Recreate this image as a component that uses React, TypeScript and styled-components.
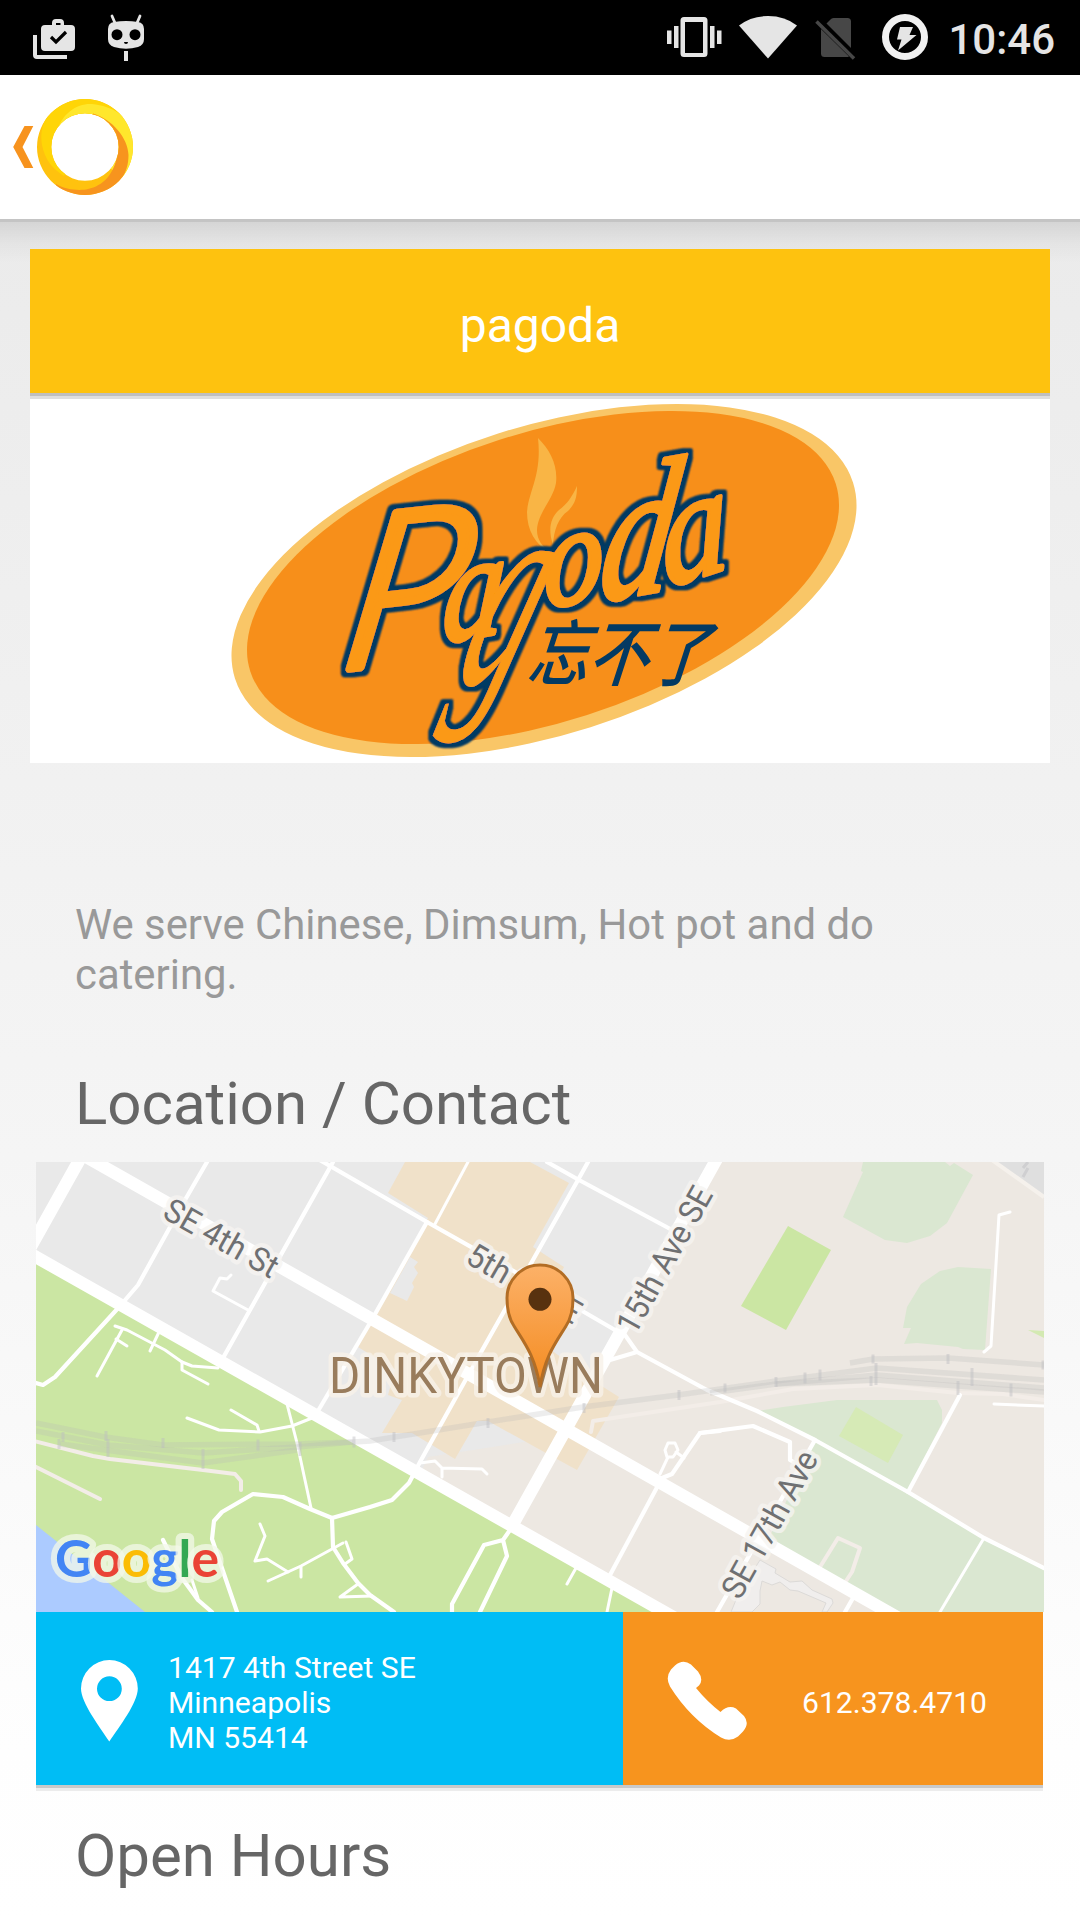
import React from 'react';
import styled, { createGlobalStyle } from 'styled-components';

const GlobalStyle = createGlobalStyle`
  * { box-sizing: border-box; }
  html, body { margin: 0; padding: 0; background: #fff; }
  body { font-family: Roboto, "Noto Sans", sans-serif; }
  svg { display: block; flex: none; }
`;

const Screen = styled.div`
  width: 1080px;
  height: 1920px;
  overflow: hidden;
  display: flex;
  flex-direction: column;
`;

const StatusBar = styled.div`
  height: 75px;
  flex: none;
  background: #000;
  display: flex;
  justify-content: space-between;
  padding: 0 25px 0 32px;
`;

const StatusGroup = styled.div<{ $gap: number }>`
  display: flex;
  gap: ${(p) => p.$gap}px;
`;

const Clock = styled.time`
  margin-left: 6px;
  font-size: 42px;
  font-weight: 500;
  line-height: 49px;
  padding-top: 15px;
  color: #e5e5e5;
  white-space: nowrap;
`;

const AppBar = styled.header`
  height: 144px;
  flex: none;
  background: #fff;
  display: flex;
`;

const Content = styled.main`
  flex: 1;
  display: flex;
  flex-direction: column;
  padding-top: 30px;
  background:
    linear-gradient(#c4c4c4, #c4c4c4) 0 0 / 100% 3px no-repeat,
    linear-gradient(rgba(0, 0, 0, 0.1), rgba(0, 0, 0, 0.03) 55%, rgba(0, 0, 0, 0)) 0 0 / 100% 44px no-repeat,
    linear-gradient(#ebebeb, #f5f5f5 55%, #fefefe 90%, #fff);
`;

const TitleBar = styled.h1`
  margin: 0 30px;
  height: 150px;
  flex: none;
  border-bottom: 3px solid #dedede;
  box-shadow: inset 0 -3px 0 #bfbfbf;
  background: #fec20f;
  color: #fff;
  font-size: 48px;
  font-weight: 400;
  line-height: 56px;
  padding-top: 49px;
  text-align: center;
`;

const Banner = styled.div`
  margin: 0 30px;
  height: 364px;
  flex: none;
  background: #fff;
`;

const Description = styled.p`
  margin: 137px 75px 0;
  font-size: 41.85px;
  line-height: 49.5px;
  color: #999;
`;

const SectionTitle = styled.h2<{ $top: number }>`
  margin: ${(p) => p.$top}px 75px 0;
  font-size: 60px;
  font-weight: 400;
  line-height: 70px;
  color: #666;
`;

const MapBox = styled.div`
  margin: 23px 36px 0;
  height: 450px;
  flex: none;
`;

const ContactRow = styled.div`
  display: flex;
  flex: none;
  height: 179px;
  margin: 0 37px 0 36px;
  border-bottom: 3px solid #ececec;
  box-shadow: inset 0 -3px 0 #c9c9c9;
  padding-bottom: 3px;
`;

const ContactCell = styled.a<{ $color: string; $width: number; $left: number; $gap: number }>`
  display: flex;
  align-items: center;
  width: ${(p) => p.$width}px;
  padding-top: 5px;
  padding-left: ${(p) => p.$left}px;
  gap: ${(p) => p.$gap}px;
  background: ${(p) => p.$color};
  color: #fff;
`;

const ContactText = styled.span`
  padding-top: 2px;
  font-size: 30.1px;
  line-height: 35px;
`;

/* ---- status bar icons ---- */

const StatusIcon = ({ x, w, children }: { x: number; w: number; children: React.ReactNode }) => (
  <svg width={w} height={75} viewBox={`${x} 0 ${w} 75`} fill="#e5e5e5">
    {children}
  </svg>
);

const WorkDone = () => (
  <StatusIcon x={32} w={46}>
    <path d="M33 35h4v20h30v4H37q-4 0-4-4z" />
    <path
      fillRule="evenodd"
      d="M45 25h7v-2q0-4 4-4h4q4 0 4 4v2h7q4 0 4 4v18q0 4-4 4H45q-4 0-4-4V29q0-4 4-4zm11 0h4.500v-2H56z"
    />
    <path d="M51 37l5 5 10-10" fill="none" stroke="#000" strokeWidth="3.200" />
  </StatusIcon>
);

const Cyanogen = () => (
  <StatusIcon x={106} w={40}>
    <path d="M112 16l3 7M140 16l-3 7" stroke="#e5e5e5" strokeWidth="2.800" strokeLinecap="round" />
    <path d="M114 22q12-2 24 0 6 1 6 7v10q0 6-6 8-12 3.500-24 0-6-2-6-8V29q0-6 6-7z" />
    <circle cx="117" cy="34.700" r="5.500" fill="#000" />
    <circle cx="135" cy="34.700" r="5.500" fill="#000" />
    <path d="M124 42h4q0 2-2 2t-2-2z" fill="#000" />
    <path d="M124 51h4v10h-4z" />
  </StatusIcon>
);

const Vibrate = () => (
  <StatusIcon x={664} w={60}>
    <path d="M667 30.500h4.500v13.500H667zM674 26h4.500v22H674zM710 26h4.500v22H710zM717 30.500h4.500v13.500H717z" />
    <path fillRule="evenodd" d="M684 17h20q3.500 0 3.500 3.500v33q0 3.500-3.500 3.500h-20q-3.500 0-3.500-3.500v-33q0-3.500 3.500-3.500zm1 5v31h18V22z" />
  </StatusIcon>
);

const Wifi = () => (
  <StatusIcon x={736} w={64}>
    <path d="M768 58.500L739 25.500Q751 16 768 16t29 9.500z" />
  </StatusIcon>
);

const NoSim = () => (
  <StatusIcon x={812} w={56}>
    <path d="M826.500 23.500l4-4q1-1.500 3-1.500h14q3.500 0 3.500 3.500V48zM821 29l28 27.500q-1 .5-3 .5h-21.500q-3.500 0-3.500-3.500z" fill="#474747" />
    <path d="M816.500 21.500L854 58.500" stroke="#474747" strokeWidth="3.500" />
  </StatusIcon>
);

const Charge = () => (
  <StatusIcon x={880} w={50}>
    <circle cx="905" cy="37" r="19.500" fill="none" stroke="#f1f1f1" strokeWidth="7" />
    <path d="M900 27h13l-3.500 8h7L898 50.500l3.500-11H897z" />
  </StatusIcon>
);

/* ---- app bar ---- */

const BackLogo = () => (
  <svg width={140} height={144} viewBox="0 75 140 144">
    <defs>
      <clipPath id="ring">
        <path
          clipRule="evenodd"
          d="M37 147a48 48 0 1 0 96 0a48 48 0 1 0-96 0zM51.300 147a33.700 33.700 0 1 1 67.400 0a33.700 33.700 0 1 1-67.400 0z"
        />
      </clipPath>
    </defs>
    <path d="M24.500 126H33.300L22.500 147L33.300 168H24.500L13.200 147z" fill="#f7931e" />
    <g clipPath="url(#ring)">
      <rect x="30" y="90" width="110" height="110" fill="#ffc20e" />
      <path d="M50 112C42 122 40 135 42 145C45 160 52 168 64 176L85 147L125 115L115 80L40 90z" fill="#ffd507" />
      <path d="M56 134C62 112 78 103 92 104C102 105 112 108 120 114L150 100V190L122 178L85 147z" fill="#ffe72c" />
      <path
        d="M93 113.500C112 119 128 138 128.500 155C128.500 165 126 172 121 180L130 200H50L56 184C66 190 80 191 88 189C103 186 114 174 117 156L85 147z"
        fill="#f7941e"
      />
    </g>
  </svg>
);

/* ---- restaurant banner ---- */

type LetterProps = {
  c: string;
  x: number;
  y: number;
  size: number;
  sx?: number;
  skew?: number;
  rot?: number;
  face?: string;
  weight?: number;
  stroke?: number;
};

const Letter = ({ c, x, y, size, sx = 1, skew = 0, rot = 0, face = 'Liberation Serif', weight = 400, stroke = 4 }: LetterProps) => (
  <text
    transform={`translate(${x} ${y}) rotate(${rot}) skewX(${skew}) scale(${sx} 1)`}
    fontFamily={`"${face}", serif`}
    fontStyle="italic"
    fontWeight={weight}
    fontSize={size}
    strokeWidth={stroke}
  >
    {c}
  </text>
);

const PagodaLogo = () => (
  <svg width={1020} height={364} viewBox="30 399 1020 364">
    <defs>
      <filter id="inline" x="-10%" y="-10%" width="120%" height="120%">
        <feMorphology in="SourceAlpha" operator="dilate" radius="4" result="fat" />
        <feGaussianBlur in="fat" stdDeviation="1" result="soft" />
        <feFlood floodColor="#033a63" />
        <feComposite in2="soft" operator="in" result="edge" />
        <feMerge>
          <feMergeNode in="edge" />
          <feMergeNode in="edge" />
          <feMergeNode in="SourceGraphic" />
        </feMerge>
      </filter>
    </defs>
    <ellipse rx="324.200" ry="154" transform="translate(544 580.500) rotate(-17.600)" fill="#f9c667" />
    <ellipse rx="307.400" ry="144.400" transform="translate(543 577.500) rotate(-17.800)" fill="#f78f1a" />
    <path d="M538 438C550 450 558 465 556 483C553 500 538 512 537 530C537 540 542 546 551 553C535 545 527 530 527 512C529 490 542 475 538 438z" fill="#f9b545" />
    <path d="M577 486C577 498 575 504 568 511C558 518 554 530 553 545C548 530 550 518 559 510C567 504 572 497 577 486z" fill="#f9b545" />
    <g filter="url(#inline)" fill="#fb9914" stroke="#fb9914" strokeLinejoin="round">
      <Letter c="P" x={336} y={670} size={212} sx={1.05} skew={-16} rot={-6} face="Lato" weight={300} stroke={8} />
      <Letter c="a" x={441} y={643} size={146} sx={0.85} skew={-14} rot={-10} />
      <Letter c="g" x={451} y={686} size={265} sx={0.5} skew={-26} rot={-6} stroke={1} />
      <Letter c="o" x={544} y={610} size={136} sx={0.9} skew={-14} rot={-14} />
      <Letter c="d" x={596} y={602} size={186} sx={0.78} skew={-18} rot={-10} />
      <Letter c="a" x={665} y={588} size={150} sx={0.92} skew={-14} rot={-18} />
    </g>
    <text
      transform="translate(526 680) skewX(-18) scale(0.84 1)"
      fontFamily='"Noto Sans CJK SC", sans-serif'
      fontWeight="500"
      fontSize="72"
      fill="#033a63"
    >
      忘不了
    </text>
  </svg>
);

/* ---- map ---- */

const avenues = [
  'M207 1162L185 1200L138 1285L120 1306L55 1377L43 1385L36 1383',
  'M333 1162L223 1358',
  'M318 1159L427 1222L517 1273L615 1330',
  'M547 1162L579 1180L674 1231',
  'M427 1222L370 1323L318 1411',
  'M588 1162L578 1180L480 1354L420 1462L409 1483L392 1500L370 1507L332 1518L310 1509L283 1497L253 1494L222 1512L214 1521L212 1539L237 1612',
  'M332 1518L333 1547L343 1563L358 1583L370 1595L394 1612',
  'M163 1540L182 1578L198 1600L212 1612',
  'M625 1335L637 1352L707 1390L757 1411L815 1440L908 1492L984 1538L1044 1568M637 1352L610 1360',
  'M960 1395L908 1492',
  'M815 1440L717 1612',
  'M720 1431L700 1433L672 1474L662 1478L610 1575',
  'M700 1433L753 1426L790 1442L790 1460L797 1464',
  'M510 1530L503 1540L484 1545L452 1604V1612M503 1540L507 1556L480 1612',
  'M853 1598L845 1612',
];

const lanes = [
  'M468 1162L435 1224',
  'M248 1310L213 1291L220 1278L227 1279L231 1275',
  'M287 1404L297 1443L311 1508',
  'M187 1418L219 1430L260 1432L292 1426L312 1418',
  'M231 1410L257 1425L259 1431',
  'M260 1524L265 1536L255 1561L267 1559L288 1572',
  'M268 1581L301 1566L343 1543M301 1566V1577',
  'M346 1542L352 1559L345 1564M358 1584L340 1597L372 1596',
  'M192 1580L198 1598',
  'M115 1326L127 1330L165 1350L182 1362L192 1366L218 1368',
  'M122 1330L97 1376M116 1339L127 1346M159 1332L150 1351M182 1362V1370L208 1384',
  'M984 1538L940 1612',
  'M612 1588L607 1612M576 1568L567 1584',
  'M668 1443H675L678 1450L673 1457H667L665 1450zM668 1457L660 1474M676 1452L684 1458',
  'M420 1463L435 1461L442 1468L482 1469L487 1474M442 1468V1477',
  'M1010 1212L999 1215L991 1346L984 1352',
  'M994 1404L1044 1406',
];

const rails = [
  'M36 1423L105 1437L163 1445L297 1444L353 1442L370 1441L488 1422L583 1407L678 1395L776 1381L877 1368L1044 1380',
  'M36 1431L108 1445L203 1453L297 1447L353 1442',
  'M60 1444L203 1463L297 1450',
  'M850 1363L873 1359L948 1358L1044 1365',
  'M776 1384L877 1375L1044 1388',
  'M710 1393L776 1384L877 1380L958 1386L1044 1392',
];

const ties: Array<[number, number, number]> = [
  [63, 1437, 10], [59, 1444, 10], [106, 1436, 10], [108, 1448, 18], [163, 1443, 10], [203, 1459, 20],
  [258, 1445, 11], [300, 1449, 14], [354, 1442, 11], [394, 1437, 10], [488, 1423, 10], [584, 1408, 10],
  [679, 1395, 10], [725, 1388, 9], [776, 1382, 10], [805, 1378, 11], [820, 1375, 11], [873, 1359, 9],
  [876, 1374, 22], [871, 1381, 10], [948, 1359, 10], [972, 1377, 18], [958, 1388, 14], [1011, 1390, 13], [1043, 1365, 9],
];

const Street = ({ x, y, angle, len, children }: { x: number; y: number; angle: number; len: number; children: string }) => (
  <text
    transform={`translate(${x} ${y}) rotate(${angle})`}
    fontSize="33"
    textLength={len}
    lengthAdjust="spacingAndGlyphs"
    fill="#6f7072"
    stroke="#f6f4f1"
    strokeOpacity="0.8"
    strokeWidth="9"
    strokeLinejoin="round"
    paintOrder="stroke"
  >
    {children}
  </text>
);

const LocationMap = () => (
  <svg width={1008} height={450} viewBox="36 1162 1008 450" fontFamily="Roboto, sans-serif">
    <defs>
      <linearGradient id="pin" x1="0" y1="0" x2="0" y2="1">
        <stop offset="0" stopColor="#fcb168" />
        <stop offset="1" stopColor="#f48b20" />
      </linearGradient>
    </defs>
    <rect x="36" y="1162" width="1008" height="450" fill="#e9e9e9" />
    <path d="M717 1162H1044V1612H664L420 1474L428 1457L530 1441L567 1430z" fill="#ede8e2" />
    <path d="M36 1258L664 1612H36z" fill="#cbe6a3" />
    <path d="M36 1525L145 1612H36z" fill="#accbff" />
    <path
      d="M405 1162L388 1193L428 1218L375 1314L358 1347L395 1370L388 1395L402 1400L382 1433H412L455 1459L477 1421H488L555 1458L577 1470L619 1397L600 1385L530 1335L564 1267L533 1247L569 1183L530 1162z"
      fill="#f0e1c9"
    />
    <path d="M410 1257L418 1262L414 1267L418 1273L412 1283L414 1287L407 1301L390 1293z" fill="#e9e9e9" />
    <g fill="#dae7d1">
      <path d="M863 1162L861 1171L863 1172L843 1217L885 1240L907 1243L930 1236L947 1223L973 1175L954 1163L950 1166L945 1162z" />
      <path d="M991 1269L958 1267L940 1271L921 1284L907 1307L903 1328H911L904 1344L917 1343L958 1347L963 1349L985 1350z" />
      <path d="M757 1411L783 1407L837 1400H937L942 1410V1423L907 1492L815 1440z" />
      <path d="M815 1440L984 1538L1044 1570V1612H900L768 1540z" />
    </g>
    <path d="M788 1226L831 1250L786 1330L741 1306z" fill="#cbe6a3" />
    <path d="M1028 1330L1044 1331V1338z" fill="#d3e9b2" />
    <path d="M856 1407L903 1435L888 1463L839 1436z" fill="#d6eab6" />
    <path d="M995 1162L1044 1197V1162z" fill="#dfdfdf" />
    <path d="M992 1160L1044 1197" stroke="#f5f1ec" strokeWidth="4" />
    <path d="M1028 1162L1023 1168M1028 1168L1023 1177" stroke="#cfcfd1" strokeWidth="3" />
    <path
      d="M760 1560L776 1569L775 1573L790 1582L802 1581L812 1590L832 1599L833 1603L827 1612H822L826 1603L798 1591L790 1590L780 1582L772 1585L762 1581L760 1591V1604L752 1612H731L738 1595z"
      fill="#f0eeed"
      stroke="#dcdad8"
      strokeWidth="1"
    />
    <g fill="none" stroke="#f3ede8" strokeWidth="4" strokeLinecap="round" strokeLinejoin="round">
      <path d="M34 1441L93 1456L110 1459L203 1470L235 1474L241 1481V1490M34 1466L100 1499" />
      <path d="M591 1432L593 1421L720 1402L793 1389L877 1385L958 1393L1003 1394L1044 1400" />
      <path d="M820 1567L838 1538L860 1548L852 1572L846 1581" />
    </g>
    <g fill="none" stroke="#fff" strokeLinejoin="round" strokeLinecap="round">
      <g strokeWidth="12.500">
        <path d="M20 1248L690 1626.500" />
        <path d="M60 1142L910 1624.500" />
        <path d="M724 1146L513 1524" />
        <path d="M90 1141L20 1266" />
      </g>
      <g strokeWidth="4.200">{avenues.map((d) => <path key={d} d={d} />)}</g>
      <g strokeWidth="3">{lanes.map((d) => <path key={d} d={d} />)}</g>
    </g>
    <g fill="none" stroke="#b9b9b9" strokeOpacity="0.25" strokeWidth="5.500">
      {rails.map((d) => <path key={d} d={d} />)}
    </g>
    <g stroke="#bdbdc2" strokeOpacity="0.45" strokeWidth="3">
      {ties.map(([x, y, h]) => <path key={`${x}-${y}`} d={`M${x} ${y - h / 2}v${h}`} />)}
    </g>

    <Street x={161} y={1217} angle={29.5} len={126}>SE 4th St</Street>
    <Street x={464} y={1262} angle={30} len={126}>5th St SE</Street>
    <Street x={635} y={1336} angle={-60.9} len={162}>15th Ave SE</Street>
    <Street x={740} y={1601} angle={-61} len={163}>SE 17th Ave</Street>
    <text
      x="329"
      y="1393"
      fontSize="50"
      textLength="274"
      lengthAdjust="spacingAndGlyphs"
      fill="#997c5c"
      stroke="#f8f1e8"
      strokeOpacity="0.8"
      strokeWidth="9"
      strokeLinejoin="round"
      paintOrder="stroke"
    >
      DINKYTOWN
    </text>

    <path
      d="M540 1387C535 1355 523 1341 514 1326C508 1317 507 1308 507 1298A33 33 0 0 1 573 1298C573 1308 572 1317 566 1326C557 1341 545 1355 540 1387z"
      fill="url(#pin)"
      stroke="#b26d25"
      strokeWidth="3"
    />
    <circle cx="540" cy="1299.300" r="11.500" fill="#58320f" />

    <text
      x="55"
      y="1577"
      fontFamily='Lato, sans-serif'
      fontWeight="700"
      fontSize="51"
      textLength="164"
      lengthAdjust="spacingAndGlyphs"
      stroke="#f3f8ea"
      strokeOpacity="0.75"
      strokeWidth="12"
      strokeLinejoin="round"
      paintOrder="stroke"
    >
      <tspan fill="#4285f4">G</tspan>
      <tspan fill="#ea4335">o</tspan>
      <tspan fill="#fbbc05">o</tspan>
      <tspan fill="#4285f4">g</tspan>
      <tspan fill="#34a853">l</tspan>
      <tspan fill="#ea4335">e</tspan>
    </text>
  </svg>
);

const PlaceIcon = () => (
  <svg width={57} height={82} viewBox="81 1660 57 82">
    <path
      fill="#fff"
      fillRule="evenodd"
      d="M109.300 1741.500C100 1727 81 1703 81 1688.500A28.400 28.400 0 0 1 137.800 1688.500C137.800 1703 119 1727 109.300 1741.500zM97 1688.700a12.400 12.400 0 1 0 24.800 0a12.400 12.400 0 1 0-24.800 0z"
    />
  </svg>
);

const PhoneIcon = () => (
  <svg width={80} height={80} viewBox="667 1661.500 80 80">
    <path
      fill="#fff"
      d="M675 1666Q683 1659 691 1665L698 1672Q704 1680 699 1686L696 1688.500Q707 1702 720.500 1712.500Q728 1705 736 1709L744 1716.500Q750 1724 743 1732L738 1737Q730 1743 721 1738Q690 1719 670 1687Q665 1678 671 1670z"
    />
  </svg>
);

export default function App() {
  return (
    <Screen>
      <GlobalStyle />
      <StatusBar>
        <StatusGroup $gap={28}>
          <WorkDone />
          <Cyanogen />
        </StatusGroup>
        <StatusGroup $gap={12}>
          <Vibrate />
          <Wifi />
          <NoSim />
          <Charge />
          <Clock>10:46</Clock>
        </StatusGroup>
      </StatusBar>
      <AppBar>
        <BackLogo />
      </AppBar>
      <Content>
        <TitleBar>pagoda</TitleBar>
        <Banner>
          <PagodaLogo />
        </Banner>
        <Description>We serve Chinese, Dimsum, Hot pot and do catering.</Description>
        <SectionTitle $top={70}>Location / Contact</SectionTitle>
        <MapBox>
          <LocationMap />
        </MapBox>
        <ContactRow>
          <ContactCell $color="#00bdf5" $width={587} $left={45} $gap={30}>
            <PlaceIcon />
            <ContactText>
              1417 4th Street SE
              <br />
              Minneapolis
              <br />
              MN 55414
            </ContactText>
          </ContactCell>
          <ContactCell $color="#f7941e" $width={420} $left={44} $gap={55}>
            <PhoneIcon />
            <ContactText>612.378.4710</ContactText>
          </ContactCell>
        </ContactRow>
        <SectionTitle $top={30}>Open Hours</SectionTitle>
      </Content>
    </Screen>
  );
}
